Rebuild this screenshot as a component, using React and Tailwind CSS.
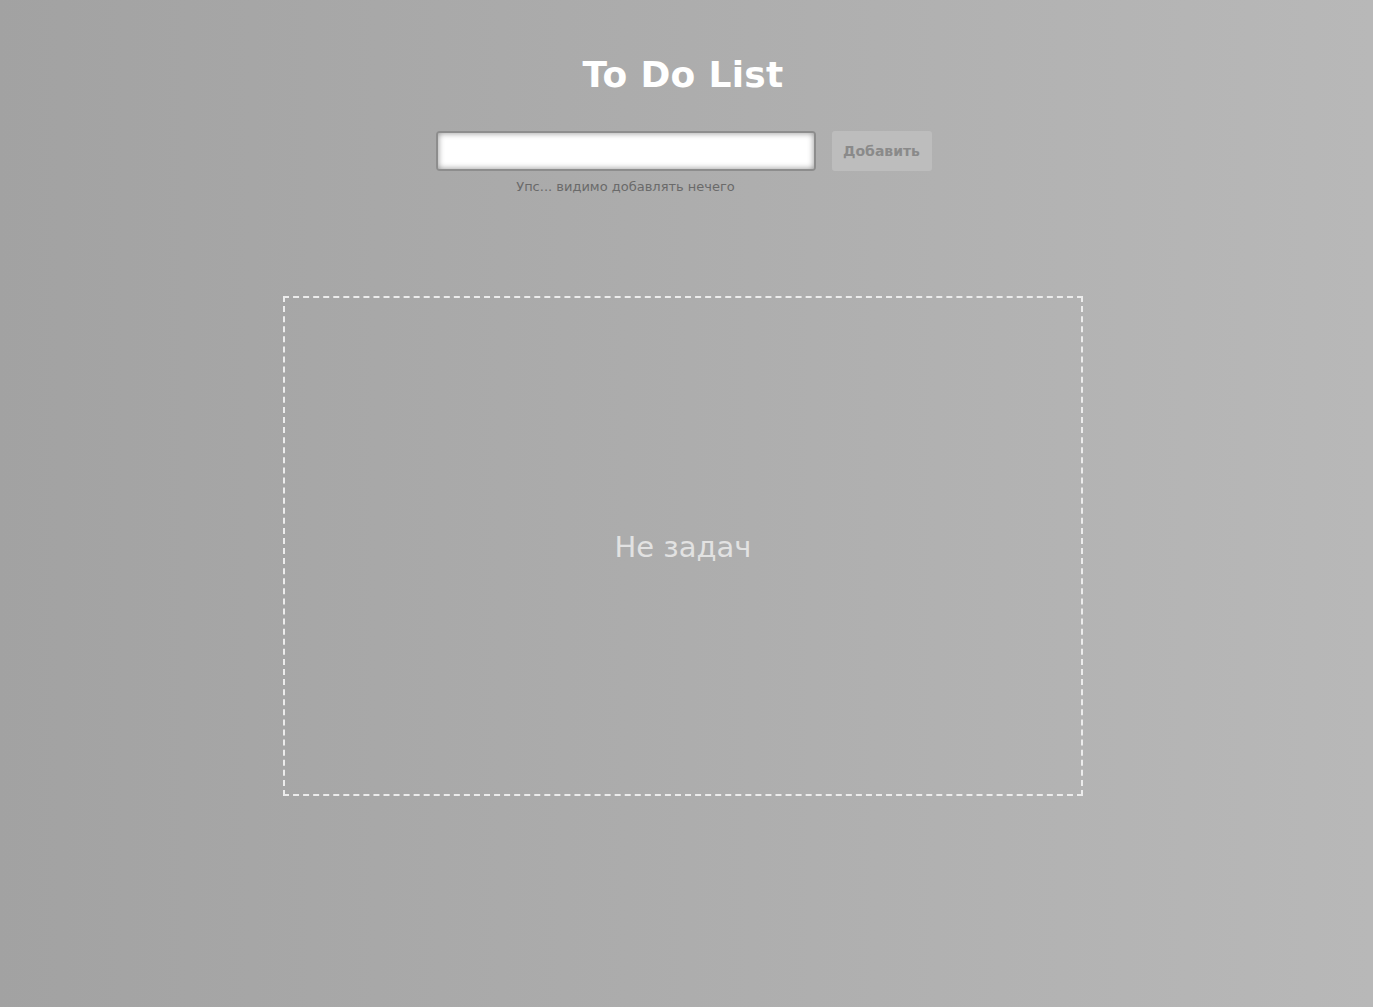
export default function App() {
  const font = { fontFamily: '"Comic Sans MS", "DejaVu Sans", sans-serif' };
  return (
    <div
      className="min-h-screen w-full bg-gradient-to-r from-[#a2a2a2] to-[#b8b8b8] flex flex-col items-center pr-[7px]"
      style={font}
    >
      <h1 className="mt-[51px] text-[36px] leading-[48px] font-bold text-white tracking-[0.3px]">To Do List</h1>
      <div className="mt-[32px] flex items-start gap-4 pl-[1px]">
        <div className="flex flex-col items-center">
          <input
            className="w-[380px] h-[40px] rounded-[4px] bg-white border-2 border-[#8d8d8d] shadow-[inset_0_0_6px_rgba(0,0,0,0.45)] outline-none px-2"
          />
          <span className="mt-[7px] text-[13px] leading-[18px] text-[#6a6a6a]">Упс... видимо добавлять нечего</span>
        </div>
        <button className="w-[100px] h-[40px] rounded-[3px] bg-[#bdbdbd] text-[#8a8a8a] text-[14px] font-bold">
          Добавить
        </button>
      </div>
      <div className="mt-[100px] w-[800px] h-[500px] border-2 border-dashed border-[#ececec] flex items-center justify-center">
        <span className="mt-[4px] text-[29px] text-[#e2e2e2]">Не задач</span>
      </div>
    </div>
  );
}
